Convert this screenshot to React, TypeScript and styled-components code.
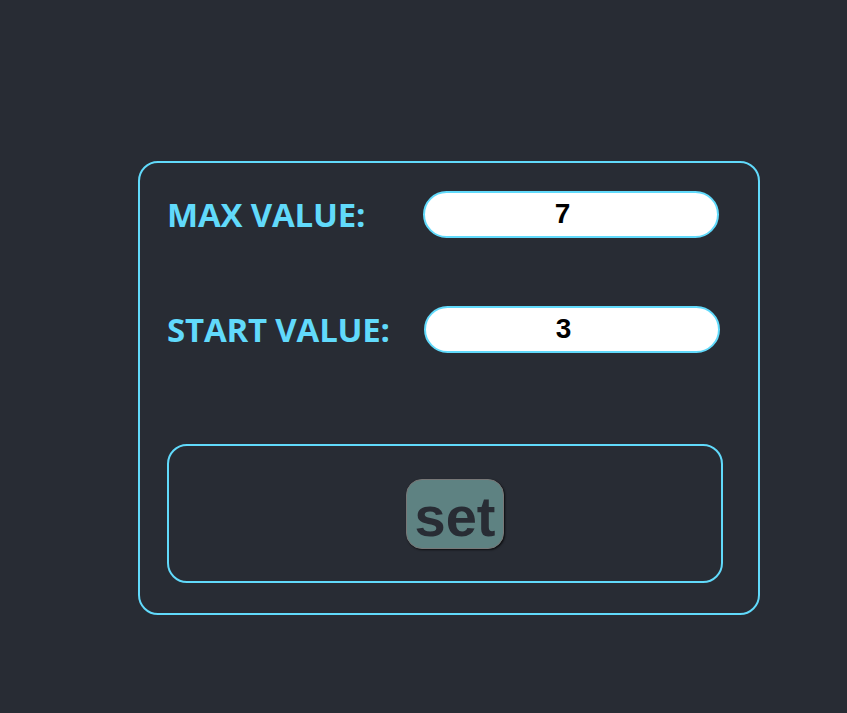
import React, { useState } from "react";
import styled, { createGlobalStyle } from "styled-components";

const Global = createGlobalStyle`
  html, body { margin: 0; padding: 0; background: #282c34; }
  body { min-height: 713px; }
`;

const Page = styled.div`
  min-height: 713px;
  background: #282c34;
  padding: 161px 0 0 138px;
  box-sizing: border-box;
`;

const Card = styled.div`
  width: 622px;
  height: 454px;
  box-sizing: border-box;
  border: 2px solid #61dafb;
  border-radius: 20px;
  padding: 28px 37px 29px 27px;
  display: flex;
  flex-direction: column;
`;

const Row = styled.div<{ $mb: number }>`
  display: flex;
  align-items: center;
  height: 46px;
  margin-bottom: ${(p) => p.$mb}px;
`;

const Label = styled.label`
  width: 256px;
  flex: none;
  color: #61dafb;
  font-family: "Open Sans", "Noto Sans", sans-serif;
  font-weight: 700;
  font-size: 33px;
  letter-spacing: -0.2px;
`;

const Input = styled.input<{ $shift: number }>`
  width: 296px;
  height: 47px;
  box-sizing: border-box;
  margin-left: ${(p) => p.$shift}px;
  border: 2px solid #61dafb;
  border-radius: 24px;
  background: #fff;
  text-align: center;
  font-family: "Liberation Sans", Arial, sans-serif;
  font-weight: 700;
  font-size: 28px;
  color: #000;
  outline: none;
  padding: 0 17px 0 0;
`;

const ButtonBox = styled.div`
  width: 556px;
  height: 139px;
  box-sizing: border-box;
  border: 2px solid #61dafb;
  border-radius: 20px;
  padding-left: 20px;
  display: flex;
  align-items: center;
  justify-content: center;
`;

const SetButton = styled.button`
  width: 98px;
  height: 70px;
  box-sizing: border-box;
  background: #5e8282;
  border: 1px solid #777;
  border-radius: 16px;
  box-shadow: 1px 1px 2px rgba(0, 0, 0, 0.7);
  color: #282c34;
  font-family: "Liberation Sans", Arial, sans-serif;
  font-weight: 700;
  font-size: 56px;
  line-height: 1;
  padding: 6px 0 0;
  display: flex;
  align-items: center;
  justify-content: center;
  cursor: pointer;
`;

export default function App() {
  const [max, setMax] = useState("7");
  const [start, setStart] = useState("3");
  return (
    <>
      <Global />
      <Page>
        <Card>
          <Row $mb={69}>
            <Label>MAX VALUE:</Label>
            <Input $shift={0} type="text" value={max} onChange={(e) => setMax(e.target.value)} />
          </Row>
          <Row $mb={92}>
            <Label>START VALUE:</Label>
            <Input $shift={1} type="text" value={start} onChange={(e) => setStart(e.target.value)} />
          </Row>
          <ButtonBox>
            <SetButton>set</SetButton>
          </ButtonBox>
        </Card>
      </Page>
    </>
  );
}
